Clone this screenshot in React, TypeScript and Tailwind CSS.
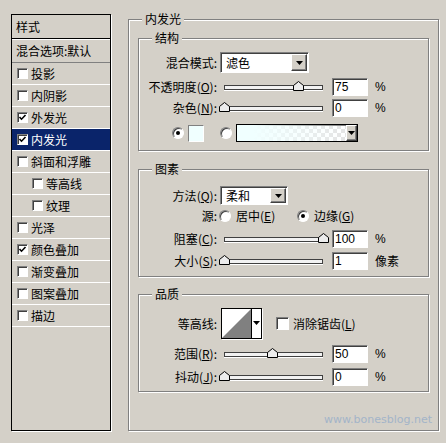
import React from 'react';

const CJK = "font-['Noto_Sans_CJK_SC','Noto_Sans',sans-serif]";
const NUM = "font-['Liberation_Sans',Arial,sans-serif]";
const SUNKEN =
  'border border-t-[#808080] border-l-[#808080] border-b-white border-r-white shadow-[inset_1px_1px_0_#404040]';
const RAISED =
  'bg-[#d4d0c8] border border-t-white border-l-white border-b-[#404040] border-r-[#404040] shadow-[inset_-1px_-1px_0_#808080]';

const ITEMS = [
  { t: '投影', c: false },
  { t: '内阴影', c: false },
  { t: '外发光', c: true },
  { t: '内发光', c: true, sel: true },
  { t: '斜面和浮雕', c: false },
  { t: '等高线', c: false, sub: true },
  { t: '纹理', c: false, sub: true },
  { t: '光泽', c: false },
  { t: '颜色叠加', c: true },
  { t: '渐变叠加', c: false },
  { t: '图案叠加', c: false },
  { t: '描边', c: false },
];

function CheckBox({ checked, big }: { checked?: boolean; big?: boolean }) {
  return (
    <div
      className={`${big ? 'w-[13px] h-[13px]' : 'w-[11px] h-[11px]'} shrink-0 bg-white ${SUNKEN} flex items-center justify-center`}
    >
      {checked && (
        <svg width="9" height="9" viewBox="0 0 9 9">
          <path d="M1.5 4 L3.5 6.2 L7.5 2" fill="none" stroke="#000" strokeWidth="1.6" />
        </svg>
      )}
    </div>
  );
}

function Radio({ on, className }: { on?: boolean; className?: string }) {
  return (
    <div
      className={`w-[12px] h-[12px] shrink-0 rounded-full bg-white ${SUNKEN} flex items-center justify-center ${className ?? ''}`}
    >
      {on && <div className="w-[4px] h-[4px] rounded-full bg-black" />}
    </div>
  );
}

function Arrow() {
  return (
    <svg width="7" height="4" viewBox="0 0 7 4">
      <polygon points="0,0 7,0 3.5,4" fill="#000" />
    </svg>
  );
}

function Select({ value, width, height }: { value: string; width: string; height: string }) {
  return (
    <div className={`ml-[3px] ${width} ${height} bg-white ${SUNKEN} flex items-stretch p-px`}>
      <div className={`flex-1 pl-[4px] flex items-center ${CJK}`}>{value}</div>
      <div className={`w-[16px] ${RAISED} flex items-center justify-center`}>
        <Arrow />
      </div>
    </div>
  );
}

function NumField({ value }: { value: string }) {
  return (
    <div className={`ml-[9px] w-[36px] h-[18px] bg-white ${SUNKEN} pl-[2px] flex items-center text-[12px] ${NUM}`}>
      {value}
    </div>
  );
}

function Slider({ pct }: { pct: number }) {
  return (
    <div className="relative ml-[7px] w-[99px] h-[18px] flex items-center">
      <div className="w-full h-[5px] border border-[#404040] bg-[#f2f2f2] shadow-[0_1px_0_#fff]" />
      <svg
        className="absolute top-[3px]"
        style={{ left: `calc(${pct}% - 5.5px)` }}
        width="11"
        height="10"
        viewBox="0 0 11 10"
      >
        <polygon points="0.5,9.5 0.5,4.5 5.5,0.5 10.5,4.5 10.5,9.5" fill="#ececec" stroke="#000" strokeWidth="1" />
      </svg>
    </div>
  );
}

function Label({ children }: { children: React.ReactNode }) {
  return <div className={`w-[78px] shrink-0 text-right whitespace-nowrap ${CJK}`}>{children}</div>;
}

function Mn({ pre, k }: { pre: string; k: string }) {
  return (
    <>
      {pre}(<span className="underline">{k}</span>):
    </>
  );
}

function Group({ title, className, children }: { title: string; className: string; children?: React.ReactNode }) {
  return (
    <div
      className={`relative border border-[#808080] shadow-[inset_1px_1px_0_#fff,1px_1px_0_#fff] flex flex-col ${className}`}
    >
      <span className={`absolute -top-[8px] left-[13px] px-[3px] bg-[#d4d0c8] leading-[14px] ${CJK}`}>{title}</span>
      {children}
    </div>
  );
}

export default function App() {
  return (
    <div className={`w-[446px] h-[443px] bg-[#d4d0c8] flex items-start text-[12px] leading-[14px] text-black ${CJK}`}>
      {/* style list */}
      <div className="ml-[11px] mt-[14px] w-[100px] h-[417px] border border-black shadow-[1px_1px_0_#fff] flex flex-col">
        <div className="h-[24px] shrink-0 border-b border-black pl-[4px] flex items-center">样式</div>
        <div className="h-px shrink-0 bg-white" />
        <div className="h-[23px] shrink-0 border-b border-[#808080] pl-[4px] flex items-center">混合选项:默认</div>
        {ITEMS.map((it) => (
          <div
            key={it.t}
            className={`h-[22px] shrink-0 border-b border-white flex items-center ${
              it.sel ? 'bg-[#0a246a] text-white' : ''
            }`}
          >
            <div className={it.sub ? 'ml-[20px]' : 'ml-[5px]'}>
              <CheckBox checked={it.c} />
            </div>
            <span className="ml-[3px]">{it.t}</span>
          </div>
        ))}
      </div>

      {/* settings */}
      <Group title="内发光" className="ml-[17px] mt-[19px] w-[311px] h-[412px] pt-[18px] px-[9px]">
        <Group title="结构" className="h-[113px]">
          <div className="flex items-center h-[21px] mt-[13px]">
            <Label>混合模式:</Label>
            <Select value="滤色" width="w-[89px]" height="h-[21px]" />
          </div>
          <div className="flex items-center h-[18px] mt-[5px]">
            <Label>
              <Mn pre="不透明度" k="O" />
            </Label>
            <Slider pct={75} />
            <NumField value="75" />
            <span className={`ml-[7px] ${NUM}`}>%</span>
          </div>
          <div className="flex items-center h-[18px] mt-[3px]">
            <Label>
              <Mn pre="杂色" k="N" />
            </Label>
            <Slider pct={0} />
            <NumField value="0" />
            <span className={`ml-[7px] ${NUM}`}>%</span>
          </div>
          <div className="flex items-center h-[18px] mt-[7px]">
            <Radio on className="ml-[33px]" />
            <div className="ml-[4px] w-[16px] h-[17px] bg-[#f0ffff] border border-[#808080] border-b-white border-r-white" />
            <Radio className="ml-[16px]" />
            <div className="ml-[4px] w-[122px] h-[18px] border border-black shadow-[inset_1px_1px_0_#808080] flex bg-[image:repeating-conic-gradient(#e4e4e4_0_25%,#ffffff_0_50%)] bg-[length:8px_8px]">
              <div className="flex-1 bg-gradient-to-r from-[#f0ffff] from-15% to-transparent" />
              <div className={`w-[11px] ${RAISED} flex items-center justify-center`}>
                <Arrow />
              </div>
            </div>
          </div>
        </Group>

        <Group title="图素" className="mt-[18px] h-[108px]">
          <div className="flex items-center h-[19px] mt-[16px]">
            <Label>
              <Mn pre="方法" k="Q" />
            </Label>
            <Select value="柔和" width="w-[68px]" height="h-[19px]" />
          </div>
          <div className="flex items-center h-[16px] mt-[3px]">
            <Label>源:</Label>
            <div className="ml-[2px] w-[78px] flex items-center">
              <Radio />
              <span className="ml-[5px] whitespace-nowrap">
                居中(<span className="underline">E</span>)
              </span>
            </div>
            <Radio on />
            <span className="ml-[5px] whitespace-nowrap">
              边缘(<span className="underline">G</span>)
            </span>
          </div>
          <div className="flex items-center h-[18px] mt-[6px]">
            <Label>
              <Mn pre="阻塞" k="C" />
            </Label>
            <Slider pct={100} />
            <NumField value="100" />
            <span className={`ml-[7px] ${NUM}`}>%</span>
          </div>
          <div className="flex items-center h-[18px] mt-[4px]">
            <Label>
              <Mn pre="大小" k="S" />
            </Label>
            <Slider pct={0} />
            <NumField value="1" />
            <span className="ml-[7px]">像素</span>
          </div>
        </Group>

        <Group title="品质" className="mt-[17px] h-[98px]">
          <div className="flex items-center h-[31px] mt-[13px]">
            <Label>等高线:</Label>
            <div className="ml-[4px] w-[41px] h-[31px] border border-black bg-white flex shadow-[1px_1px_0_#fff]">
              <svg width="29" height="29" viewBox="0 0 29 29">
                <polygon points="0,29 29,0 29,29" fill="#808080" />
              </svg>
              <div className="flex-1 border-l border-black flex justify-center pt-[12px]">
                <Arrow />
              </div>
            </div>
            <div className="ml-[14px]">
              <CheckBox big />
            </div>
            <span className="ml-[4px] whitespace-nowrap">
              消除锯齿(<span className="underline">L</span>)
            </span>
          </div>
          <div className="flex items-center h-[18px] mt-[6px]">
            <Label>
              <Mn pre="范围" k="R" />
            </Label>
            <Slider pct={49} />
            <NumField value="50" />
            <span className={`ml-[7px] ${NUM}`}>%</span>
          </div>
          <div className="flex items-center h-[18px] mt-[5px]">
            <Label>
              <Mn pre="抖动" k="J" />
            </Label>
            <Slider pct={0} />
            <NumField value="0" />
            <span className={`ml-[7px] ${NUM}`}>%</span>
          </div>
        </Group>

        <div className="mt-[21px] self-end mr-[-3px] h-[14px] leading-[14px] text-[11px] text-[#a3b4c8] font-['DejaVu_Sans',sans-serif]">
          www.bonesblog.net
        </div>
      </Group>
    </div>
  );
}
